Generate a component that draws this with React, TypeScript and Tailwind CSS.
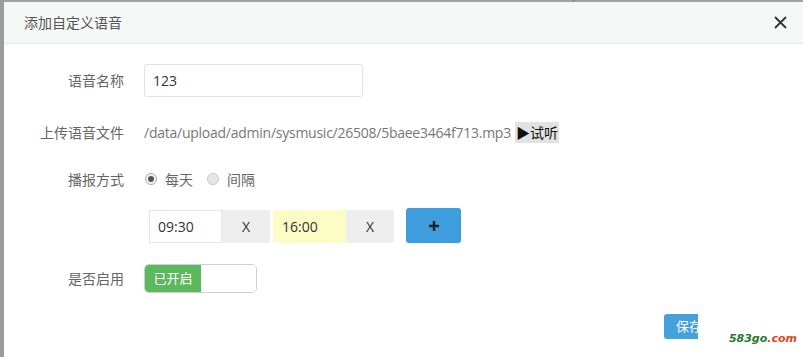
import React from 'react'

const FONT = { fontFamily: '"Open Sans", "Noto Sans CJK SC", sans-serif' }

function Label({ children }: { children: React.ReactNode }) {
  return <div className="w-[120px] shrink-0 pr-0 text-right text-[14px] text-[#666]">{children}</div>
}

function Radio({ checked, label }: { checked?: boolean; label: string }) {
  return (
    <label className="flex items-center gap-[8px]">
      <span
        className={`flex h-[12px] w-[12px] items-center justify-center rounded-full border ${
          checked ? 'border-[#aaa] bg-[#f3f3f3]' : 'border-[#c8c8c8] bg-[#e6e6e6]'
        }`}
      >
        {checked && <span className="h-[6px] w-[6px] rounded-full bg-[#555]" />}
      </span>
      <span className="text-[14px] text-[#666]">{label}</span>
    </label>
  )
}

export default function App() {
  return (
    <div className="relative flex h-[357px] w-[803px] overflow-hidden bg-white" style={FONT}>
      <div className="w-[4px] shrink-0 bg-[#9c9c9c]" />
      <div className="flex flex-1 flex-col">
        <div className="flex h-[2px] shrink-0">
          <div className="w-[569px] bg-[#a3a3a3]" />
          <div className="w-[1px] bg-[#777]" />
          <div className="flex-1 bg-[#a3a3a3]" />
        </div>
        {/* Header */}
        <div className="flex h-[42px] shrink-0 items-center justify-between border-b border-[#e8e8e8] bg-[#f6f7f7] pl-[20px] pr-[16px]">
          <span className="text-[14px] text-[#555]">添加自定义语音</span>
          <svg width="13" height="13" viewBox="0 0 13 13">
            <path d="M1 1L12 12M12 1L1 12" stroke="#333" strokeWidth="1.8" />
          </svg>
        </div>

        {/* Body */}
        <div className="flex flex-col pt-[20px]">
          <div className="flex h-[33px] items-center gap-[20px]">
            <Label>语音名称</Label>
            <div className="flex h-[33px] w-[219px] items-center rounded-[3px] border border-[#dde3ea] px-[8px] text-[14px] text-[#333]">
              123
            </div>
          </div>

          <div className="mt-[20px] flex h-[30px] items-center gap-[20px]">
            <Label>上传语音文件</Label>
            <div className="flex items-center gap-[4px] text-[14px] text-[#777]">
              <span className="tracking-[-0.25px]">/data/upload/admin/sysmusic/26508/5baee3464f713.mp3</span>
              <span className="bg-[#e2e2e2] px-[1px] text-[#111]">▶试听</span>
            </div>
          </div>

          <div className="mt-[17px] flex h-[30px] items-center gap-[20px]">
            <Label>播报方式</Label>
            <div className="flex items-center gap-[14px] pl-[1px]">
              <Radio checked label="每天" />
              <Radio label="间隔" />
            </div>
          </div>

          <div className="mt-[14px] flex h-[35px] items-center gap-[20px]">
            <div className="w-[120px] shrink-0" />
            <div className="flex items-end pl-[5px]">
              <div className="flex h-[33px] w-[73px] items-center border border-[#e3e7ec] bg-white px-[8px] text-[14px] text-[#333]">09:30</div>
              <div className="flex h-[33px] w-[48px] items-center justify-center rounded-r-[2px] bg-[#eeeeee] text-[14px] text-[#333]">X</div>
              <div className="ml-[3px] flex h-[33px] w-[73px] items-center bg-[#fbfdc4] px-[9px] text-[14px] text-[#333]">16:00</div>
              <div className="flex h-[33px] w-[48px] items-center justify-center rounded-r-[2px] bg-[#eeeeee] text-[14px] text-[#333]">X</div>
              <div className="ml-[12px] flex h-[35px] w-[55px] items-center justify-center rounded-[3px] bg-[#3d9ddd]">
                <svg width="10" height="10" viewBox="0 0 10 10">
                  <path d="M5 0V10M0 5H10" stroke="#222" strokeWidth="2.4" />
                </svg>
              </div>
            </div>
          </div>

          <div className="mt-[21px] flex h-[29px] items-center gap-[20px]">
            <Label>是否启用</Label>
            <div className="flex h-[29px] w-[113px] overflow-hidden rounded-[5px] border border-[#cfcfcf]">
              <div className="flex w-[56px] items-center justify-center bg-[#5cb85c] text-[13px] text-white">已开启</div>
              <div className="flex-1 bg-white" />
            </div>
          </div>

          <div className="mt-[21px] flex pl-[660px]">
            <div className="w-[34px] overflow-hidden">
              <div className="flex h-[25px] w-[60px] items-center rounded-[3px] bg-[#45a0dc] pl-[12px] text-[13px] text-white">保存</div>
            </div>
          </div>
        </div>
      </div>

      <div className="absolute bottom-[13px] right-[6px] text-[11px] font-bold italic leading-none" style={{ fontFamily: '"DejaVu Sans", sans-serif' }}>
        <span className="text-[#1d7a2a]">583go</span>
        <span className="text-[#e5461b]">.com</span>
      </div>
    </div>
  )
}
